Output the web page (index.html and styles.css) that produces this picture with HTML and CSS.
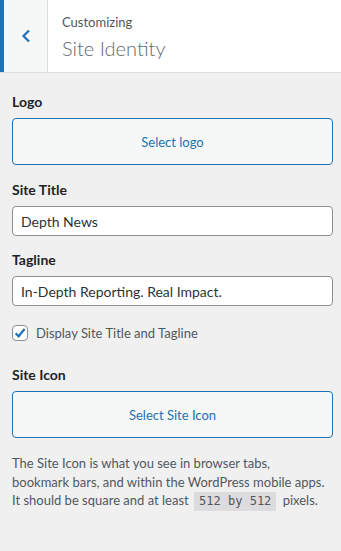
FILE: index.html
```html
<!DOCTYPE html>
<html lang="en">
<head>
  <meta charset="UTF-8">
  <meta name="viewport" content="width=device-width, initial-scale=1">
  <title>Customizing Site Identity</title>
  <link rel="stylesheet" href="styles.css">
</head>
<body>
  <div class="section-head">
    <button class="back" aria-label="Back">
      <svg width="20" height="20" viewBox="0 0 20 20"><path d="M13 4.5 L7.5 10 L13 15.5" fill="none" stroke="#2271b1" stroke-width="2.2"/></svg>
    </button>
    <div class="head-title">
      <span class="action">Customizing</span>
      <h2>Site Identity</h2>
    </div>
  </div>

  <div class="controls">
    <div class="control">
      <span class="label">Logo</span>
      <button class="upload">Select logo</button>
    </div>

    <div class="control">
      <label class="label" for="blogname">Site Title</label>
      <input type="text" id="blogname" value="Depth News">
    </div>

    <div class="control">
      <label class="label" for="blogdescription">Tagline</label>
      <input type="text" id="blogdescription" value="In-Depth Reporting. Real Impact.">
    </div>

    <div class="control check">
      <label><span class="box"><svg width="16" height="16" viewBox="0 0 16 16"><path d="M3.6 8.3 L6.6 11.3 L12.6 4" fill="none" stroke="#2271b1" stroke-width="2.2"/></svg></span>Display Site Title and Tagline</label>
    </div>

    <div class="control">
      <span class="label">Site Icon</span>
      <button class="upload">Select Site Icon</button>
      <p class="description">The Site Icon is what you see in browser tabs, bookmark bars, and within the WordPress mobile apps. It should be square and at least <code>512 by 512</code> pixels.</p>
    </div>
  </div>
</body>
</html>
```

FILE: styles.css
```css
body {
  margin: 0;
  font-family: 'Lato', 'Noto Sans', sans-serif;
  background: #f0f0f1;
  color: #50575e;
  font-size: 13px;
}
.section-head {
  display: flex;
  height: 72px;
  background: #fff;
  border-bottom: 1px solid #dcdcde;
}
.back {
  width: 48px;
  border: none;
  border-left: 4px solid #2271b1;
  border-right: 1px solid #dcdcde;
  background: #f6f7f7;
  padding: 0;
  display: flex;
  align-items: center;
  justify-content: center;
}
.head-title {
  padding: 13px 0 0 14px;
}
.action {
  display: block;
  font-size: 13px;
  line-height: 18px;
  color: #50575e;
}
h2 {
  margin: 4px 0 0;
  font-size: 20px;
  font-weight: 300;
  line-height: 26px;
  color: #646970;
}
.controls {
  padding: 19px 8px 0 12px;
}
.control {
  margin-bottom: 14px;
}
.label {
  display: block;
  font-size: 14px;
  font-weight: 700;
  line-height: 20px;
  color: #1d2327;
  margin-bottom: 6px;
}
.upload {
  display: block;
  width: 100%;
  height: 47px;
  font-family: inherit;
  font-size: 13px;
  color: #2271b1;
  background: #f6f7f7;
  border: 1px solid #2271b1;
  border-radius: 4px;
}
.control:first-child {
  margin-bottom: 15px;
}
input[type="text"] {
  box-sizing: border-box;
  width: 100%;
  height: 30px;
  padding: 0 8px;
  font-family: inherit;
  font-size: 14px;
  color: #2c3338;
  border: 1px solid #8c8f94;
  border-radius: 4px;
  background: #fff;
}
.check {
  margin: 0 0 19px;
}
.check label {
  display: flex;
  align-items: center;
  gap: 8px;
  height: 26px;
  font-size: 13px;
  color: #50575e;
}
.box {
  box-sizing: border-box;
  width: 16px;
  height: 16px;
  border: 1px solid #8c8f94;
  border-radius: 4px;
  background: #fff;
  display: flex;
  align-items: center;
  justify-content: center;
}
.box svg {
  flex: none;
}
.description {
  margin: 16px 4px 0 0;
  line-height: 18.5px;
  color: #50575e;
}
code {
  font-family: 'DejaVu Sans Mono', monospace;
  font-size: 12px;
  background: #dcdcde;
  padding: 2px 5px 3px;
  margin: 0 3px 0 2px;
}
```
